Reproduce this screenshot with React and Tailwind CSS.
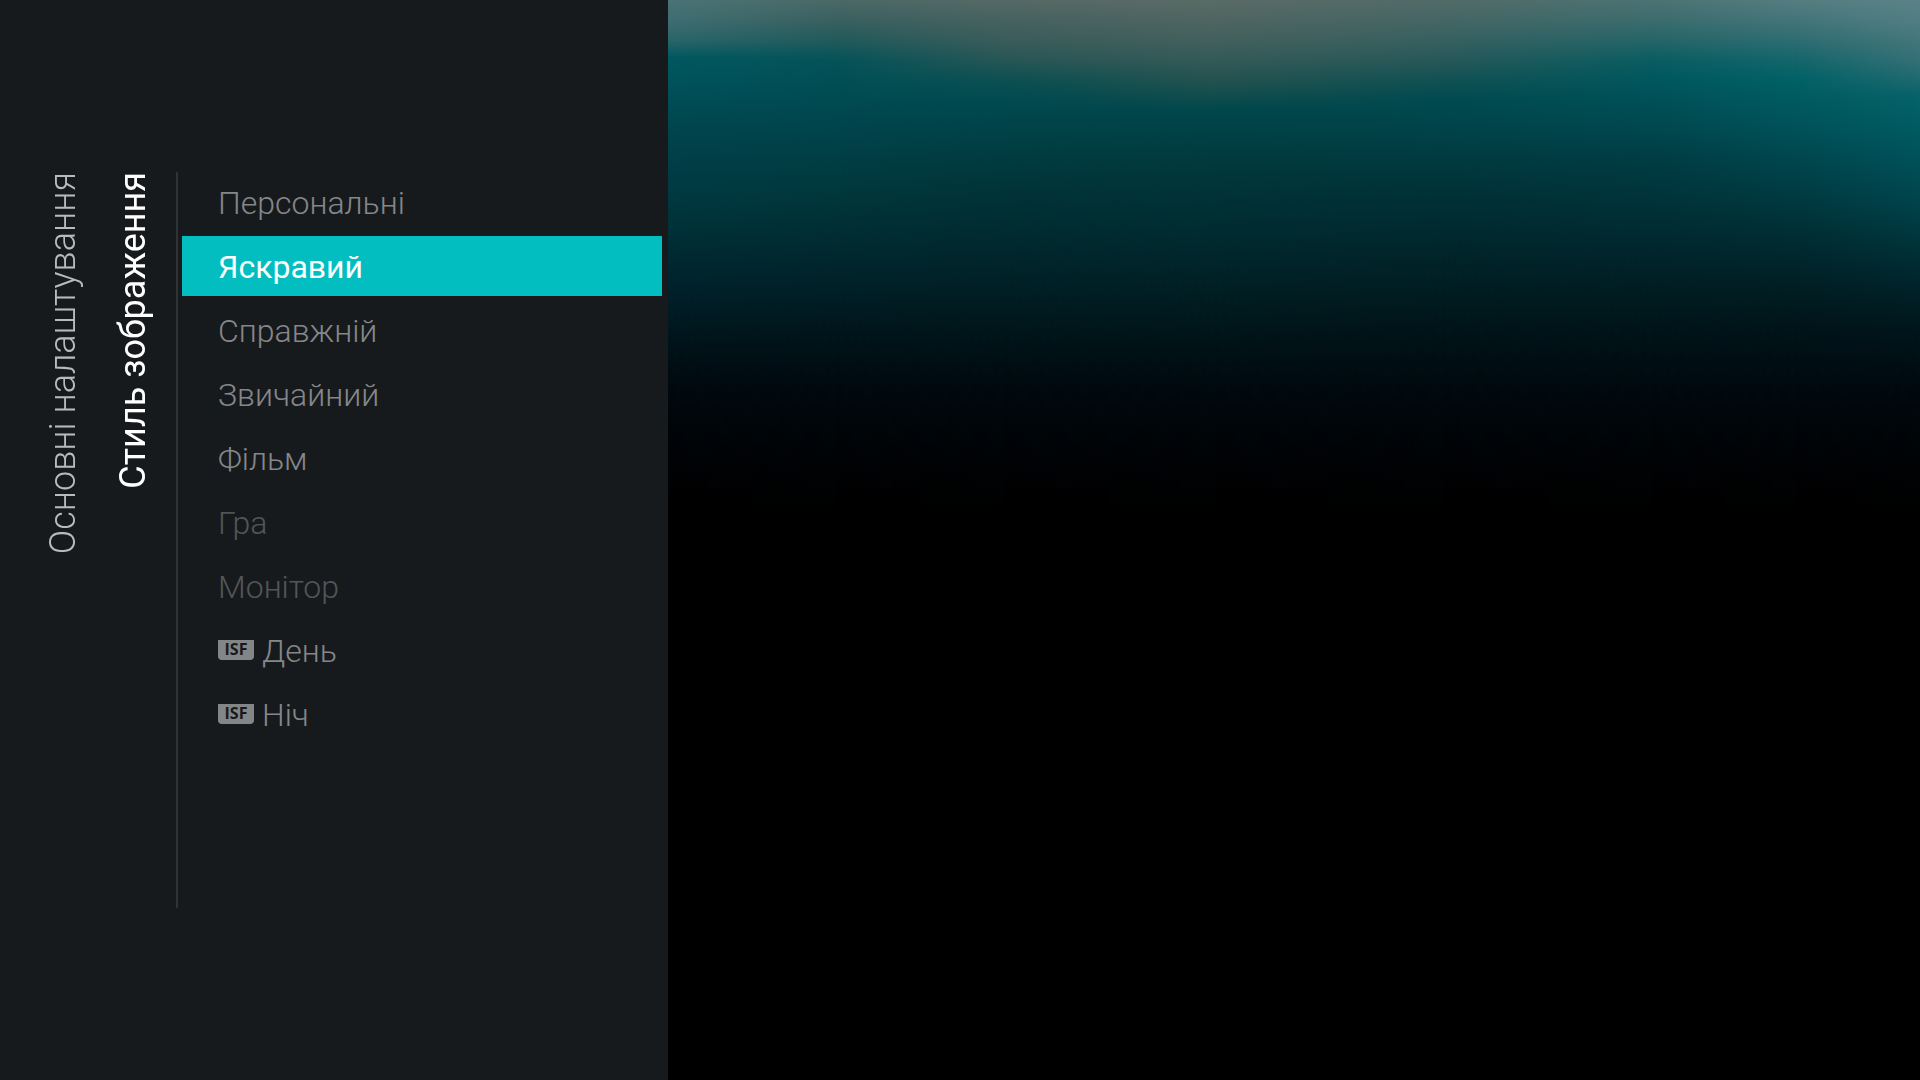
import React, { useState } from 'react';

const pictureModes = [
  { id: 'personal', label: 'Персональні' },
  { id: 'vivid', label: 'Яскравий' },
  { id: 'natural', label: 'Справжній' },
  { id: 'standard', label: 'Звичайний' },
  { id: 'movie', label: 'Фільм' },
  { id: 'game', label: 'Гра', disabled: true },
  { id: 'monitor', label: 'Монітор', disabled: true },
  { id: 'isf-day', label: 'День', isf: true },
  { id: 'isf-night', label: 'Ніч', isf: true },
];

// vertical colour runs of the backdrop, x and y on a 1252 x 1080 canvas
const backdropColumns = [
  { x: 0, stops: [[0, '#4a7375'], [20, '#3f6e72'], [40, '#2a666a'], [58, '#00585f'], [90, '#005059'], [120, '#004850'], [160, '#003f48'], [200, '#003840'], [240, '#002e36'], [290, '#00212a'], [330, '#00171e']] },
  { x: 168, stops: [[0, '#4a6a67'], [20, '#3a6060'], [40, '#225a5b'], [60, '#045359'], [90, '#004d54'], [120, '#00464e'], [160, '#003e44'], [200, '#00363b'], [240, '#002c32'], [290, '#002027'], [330, '#00161c']] },
  { x: 336, stops: [[0, '#566966'], [20, '#466260'], [40, '#3a5c5b'], [60, '#285656'], [80, '#0c5052'], [100, '#004a50'], [120, '#00454b'], [160, '#003b40'], [200, '#003237'], [240, '#002a2f'], [290, '#001f25'], [330, '#00161b']] },
  { x: 546, stops: [[0, '#5a6b66'], [20, '#4f6561'], [40, '#43605d'], [60, '#345a58'], [80, '#245250'], [98, '#104c4c'], [110, '#00474c'], [130, '#004246'], [160, '#003a3e'], [200, '#003236'], [240, '#002a2f'], [290, '#001f24'], [330, '#00161a']] },
  { x: 774, stops: [[0, '#516b68'], [20, '#456665'], [40, '#376060'], [60, '#285859'], [80, '#125153'], [100, '#004a50'], [130, '#004349'], [160, '#003a40'], [200, '#003036'], [240, '#00282d'], [290, '#001d22'], [330, '#001419']] },
  { x: 984, stops: [[0, '#4c7273'], [20, '#3c6c6e'], [40, '#266568'], [60, '#0a5d61'], [80, '#00575d'], [100, '#005057'], [130, '#00474e'], [160, '#003c43'], [200, '#00333a'], [240, '#00292f'], [290, '#001d22'], [330, '#001419']] },
  { x: 1127, stops: [[0, '#557d80'], [20, '#43757a'], [40, '#2e6d72'], [60, '#14666b'], [80, '#006166'], [100, '#005a60'], [130, '#005158'], [160, '#00464d'], [200, '#003940'], [240, '#002c32'], [290, '#001e23'], [330, '#001419']] },
  { x: 1252, stops: [[0, '#5a8286'], [20, '#517e83'], [40, '#44767b'], [60, '#347076'], [80, '#1e696f'], [97, '#046268'], [120, '#005d64'], [160, '#005159'], [200, '#00444c'], [240, '#00353c'], [290, '#002228'], [330, '#00161c']] },
];

const fadeOut = [[375, '#000c12'], [410, '#00070b'], [460, '#000305'], [520, '#000000']];

const Backdrop = () => {
  return (
    <svg className="h-full w-full" viewBox="0 0 1252 1080" preserveAspectRatio="none" aria-hidden="true">
      <defs>
        {backdropColumns.map((column, index) => {
          const prev = index > 0 ? backdropColumns[index - 1].x : 0;
          return (
            <React.Fragment key={column.x}>
              <linearGradient id={`run-${index}`} gradientUnits="userSpaceOnUse" x1="0" y1="0" x2="0" y2="1080">
                {[...column.stops, ...fadeOut].map(([y, color]) => (
                  <stop key={y} offset={y / 1080} stopColor={color} />
                ))}
              </linearGradient>
              {index > 0 && (
                <>
                  <linearGradient id={`ramp-${index}`} gradientUnits="userSpaceOnUse" x1={prev} y1="0" x2={column.x} y2="0">
                    <stop offset="0" stopColor="#fff" stopOpacity="0" />
                    <stop offset="1" stopColor="#fff" stopOpacity="1" />
                  </linearGradient>
                  <mask id={`mask-${index}`} maskUnits="userSpaceOnUse" x="0" y="0" width="1252" height="1080">
                    <rect width="1252" height="1080" fill={`url(#ramp-${index})`} />
                  </mask>
                </>
              )}
            </React.Fragment>
          );
        })}
      </defs>
      {backdropColumns.map((column, index) => (
        <rect
          key={column.x}
          width="1252"
          height="1080"
          fill={`url(#run-${index})`}
          mask={index > 0 ? `url(#mask-${index})` : undefined}
        />
      ))}
    </svg>
  );
};

const IsfBadge = () => {
  return (
    <span className="mr-2 flex h-5 w-9 items-start justify-center rounded-b bg-[#838587] font-['Open_Sans',sans-serif] text-base leading-[18px] font-bold text-[#171a1d]">
      ISF
    </span>
  );
};

const ModeItem = ({ mode, selected, onSelect }) => {
  let color = 'font-light text-[#85878a]';
  if (mode.disabled) color = 'font-light text-[#525558]';
  if (selected) color = 'bg-[#02bec0] font-normal text-white';

  return (
    <li>
      <button
        type="button"
        disabled={mode.disabled}
        aria-pressed={selected}
        onClick={() => onSelect(mode.id)}
        className={`flex h-15 w-full items-center px-9 text-left text-[32px] leading-10 ${color}`}
      >
        {mode.isf && <IsfBadge />}
        <span className="pt-0.5">{mode.label}</span>
      </button>
    </li>
  );
};

const App = () => {
  const [selected, setSelected] = useState('vivid');

  return (
    <div className="flex h-screen bg-black font-['Roboto',sans-serif]">
      <aside className="flex w-[668px] shrink-0 bg-[#171a1d] pt-43 pr-1.5 pl-7">
        <p className="w-[70px] rotate-180 self-start text-[36px] leading-[70px] font-light text-[#b9babb] [writing-mode:vertical-rl]">
          Основні налаштування
        </p>
        <h1 className="mr-2 w-[70px] rotate-180 self-start text-[36px] leading-[70px] font-normal text-white [writing-mode:vertical-rl]">
          Стиль зображення
        </h1>
        <div className="mb-43 flex-1 border-l-2 border-[#303336] pl-1">
          <ul className="flex flex-col gap-1">
            {pictureModes.map((mode) => (
              <ModeItem key={mode.id} mode={mode} selected={selected === mode.id} onSelect={setSelected} />
            ))}
          </ul>
        </div>
      </aside>
      <main className="min-w-0 flex-1">
        <Backdrop />
      </main>
    </div>
  );
};

export default App;
